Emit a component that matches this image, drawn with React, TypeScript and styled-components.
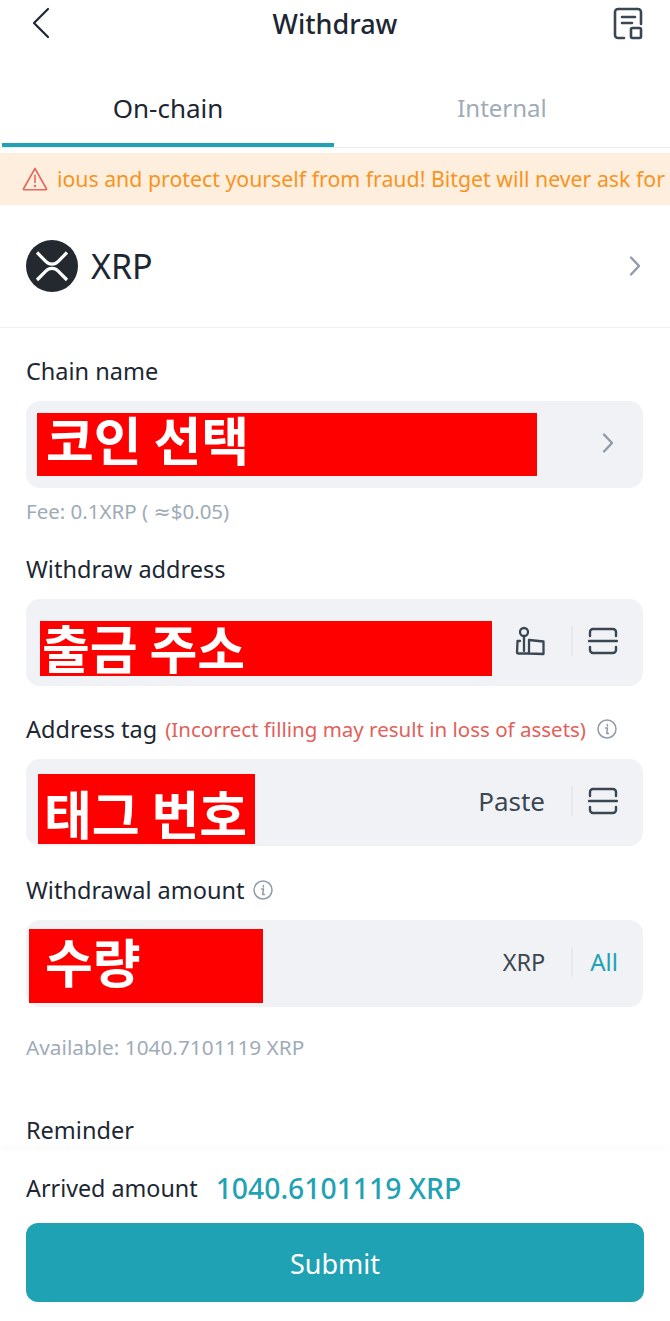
import styled, { createGlobalStyle } from 'styled-components';

const GlobalStyle = createGlobalStyle`
  html, body {
    margin: 0;
    padding: 0;
    background: #fff;
  }
  * {
    box-sizing: border-box;
  }
`;

const FONT = `"Noto Sans", "DejaVu Sans", "Noto Sans CJK KR", sans-serif`;

function BackIcon() {
  return (
    <svg width="20" height="32" viewBox="0 0 20 32" fill="none">
      <path d="M18 2 4 16 18 30" stroke="#1c2733" strokeWidth="2.2" strokeLinecap="round" strokeLinejoin="round" />
    </svg>
  );
}

function RecordIcon() {
  return (
    <svg width="30" height="34" viewBox="0 0 30 34" fill="none" stroke="#3a4753" strokeWidth="2.6" strokeLinecap="round" strokeLinejoin="round">
      <path d="M11 31H5a3 3 0 0 1-3-3V5a3 3 0 0 1 3-3h20a3 3 0 0 1 3 3v12" />
      <path d="M9 10h13M9 16h10" />
      <rect x="18" y="21" width="10" height="10" rx="1.5" />
    </svg>
  );
}

function WarningIcon() {
  return (
    <svg width="26" height="24" viewBox="0 0 26 24" fill="none" stroke="#e5685c" strokeWidth="1.6" strokeLinejoin="round" strokeLinecap="round">
      <path d="M13 1.5 24.6 22a.5.5 0 0 1-.4.7H1.8a.5.5 0 0 1-.4-.7z" />
      <path d="M13 8.5v7" />
      <circle cx="13" cy="19" r="0.5" />
    </svg>
  );
}

function XrpLogo() {
  return (
    <svg width="52" height="52" viewBox="0 0 52 52" fill="none">
      <circle cx="26" cy="26" r="26" fill="#23292f" />
      <path d="M11 12.500 20 21.500a8 8 0 0 0 12 0L41 12.500" stroke="#fff" strokeWidth="3.200" />
      <path d="M11 40 20 31a8 8 0 0 1 12 0L41 40" stroke="#fff" strokeWidth="3.200" />
    </svg>
  );
}

function Chevron() {
  return (
    <svg width="14" height="22" viewBox="0 0 14 22" fill="none">
      <path d="M3 2.500 11 11 3 19.500" stroke="#8f9ba8" strokeWidth="2.4" strokeLinecap="round" strokeLinejoin="round" />
    </svg>
  );
}

function ScanIcon() {
  return (
    <svg width="30" height="28" viewBox="0 0 30 28" fill="none" stroke="#3a4753" strokeWidth="2.4" strokeLinecap="round">
      <path d="M2 9V5a3 3 0 0 1 3-3h20a3 3 0 0 1 3 3v4" />
      <path d="M1 14h28" />
      <path d="M2 20v3a3 3 0 0 0 3 3h20a3 3 0 0 0 3-3v-3" />
    </svg>
  );
}

function AddressBookIcon() {
  return (
    <svg width="30" height="30" viewBox="0 0 30 30" fill="none" stroke="#3a4753" strokeWidth="2.3" strokeLinecap="round" strokeLinejoin="round">
      <circle cx="9" cy="6" r="4" />
      <path d="M9 10v15" />
      <path d="M5 15H2.500L2 26.500a1 1 0 0 0 1 1h10l15.500.5V15.500L14 14v13" />
    </svg>
  );
}

function InfoIcon() {
  return (
    <svg width="20" height="20" viewBox="0 0 20 20" fill="none">
      <circle cx="10" cy="10" r="9" stroke="#8f9ba8" strokeWidth="1.500" />
      <path d="M10.400 5.500v1.500M8.500 9h2l-.8 5.500h1.800" stroke="#8f9ba8" strokeWidth="1.500" strokeLinecap="round" strokeLinejoin="round" />
    </svg>
  );
}

export default function App() {
  return (
    <>
      <GlobalStyle />
      <Page>
        <TopBar>
          <BackButton>
            <BackIcon />
          </BackButton>
          <Title>Withdraw</Title>
          <RecordButton>
            <RecordIcon />
          </RecordButton>
        </TopBar>

        <Tabs>
          <Tab $active>On-chain</Tab>
          <Tab>Internal</Tab>
        </Tabs>

        <Notice>
          <NoticeIcon>
            <WarningIcon />
          </NoticeIcon>
          <NoticeTrack>
            <NoticeText>Be cautious and protect yourself from fraud! Bitget will never ask for</NoticeText>
          </NoticeTrack>
        </Notice>

        <CoinRow>
          <XrpLogo />
          <CoinName>XRP</CoinName>
          <CoinChevron>
            <Chevron />
          </CoinChevron>
        </CoinRow>

        <Form>
          <Label $top={28}>Chain name</Label>
          <Field>
            <Redact $left={11} $top={12} $width={500} $height={63} $padLeft={9} $padTop={0}>코인 선택</Redact>
            <FieldEnd>
              <FieldChevron>
                <Chevron />
              </FieldChevron>
            </FieldEnd>
          </Field>
          <FeeHint>Fee: 0.1XRP ( ≈$0.05)</FeeHint>

          <Label $top={30}>Withdraw address</Label>
          <Field>
            <Redact $left={14} $top={22} $width={452} $height={55} $padLeft={2} $padTop={0}>출금 주소</Redact>
            <FieldEnd>
              <AddressBookIcon />
              <Divider $gap={15} />
              <ScanIcon />
            </FieldEnd>
          </Field>

          <TagLabel>
            <Label $top={0}>Address tag</Label>
            <Warn>(Incorrect filling may result in loss of assets)</Warn>
            <InfoIcon />
          </TagLabel>
          <Field>
            <Redact $left={12} $top={15} $width={217} $height={70} $padLeft={6} $padTop={13}>태그 번호</Redact>
            <FieldEnd>
              <Paste>Paste</Paste>
              <Divider $gap={15} />
              <ScanIcon />
            </FieldEnd>
          </Field>

          <AmountLabel>
            <Label $top={0}>Withdrawal amount</Label>
            <InfoIcon />
          </AmountLabel>
          <Field>
            <Redact $left={3} $top={9} $width={234} $height={74} $padLeft={16} $padTop={6}>수량</Redact>
            <FieldEnd>
              <Unit>XRP</Unit>
              <Divider $gap={17} />
              <AllLink>All</AllLink>
            </FieldEnd>
          </Field>
          <Hint>Available: 1040.7101119 XRP</Hint>
          <Label $top={55}>Reminder</Label>
        </Form>

        <Footer>
          <ArrivedRow>
            <ArrivedLabel>Arrived amount</ArrivedLabel>
            <ArrivedValue>1040.6101119 XRP</ArrivedValue>
          </ArrivedRow>
          <Submit>Submit</Submit>
        </Footer>
      </Page>
    </>
  );
}

const Page = styled.div`
  position: relative;
  width: 670px;
  height: 1321px;
  overflow: hidden;
  background: #fff;
  font-family: ${FONT};
  color: #1c2733;
`;

const TopBar = styled.header`
  position: relative;
  height: 48px;
  display: flex;
  align-items: center;
  justify-content: center;
`;

const BackButton = styled.div`
  position: absolute;
  left: 30px;
  top: 7px;
  line-height: 0;
`;

const RecordButton = styled.div`
  position: absolute;
  left: 613px;
  top: 7px;
  line-height: 0;
`;

const Title = styled.h1`
  margin: 0;
  font-size: 27px;
  font-weight: 500;
  line-height: 48px;
  color: #1c2733;
`;

const Tabs = styled.div`
  height: 100px;
  display: flex;
  padding: 0 0 0 2px;
  border-bottom: 1px solid #e9ebee;
`;

const Tab = styled.div<{ $active?: boolean }>`
  width: ${(p) => (p.$active ? '332px' : '336px')};
  height: 99px;
  padding-top: 39px;
  text-align: center;
  font-size: ${(p) => (p.$active ? '26px' : '24px')};
  line-height: 42px;
  color: ${(p) => (p.$active ? '#1c2733' : '#a0abb8')};
  border-bottom: ${(p) => (p.$active ? '4px solid #1fa2b4' : 'none')};
`;

const Notice = styled.div`
  margin-top: 5px;
  height: 52px;
  display: flex;
  align-items: center;
  background: #feeedd;
  padding-left: 22px;
`;

const NoticeIcon = styled.div`
  width: 36px;
  flex: none;
  line-height: 0;
`;

const NoticeTrack = styled.div`
  flex: 1;
  overflow: hidden;
  position: relative;
  height: 30px;
`;

const NoticeText = styled.div`
  position: absolute;
  right: 5px;
  top: 0;
  white-space: nowrap;
  font-size: 21.3px;
  line-height: 30px;
  color: #f7941f;
`;

const CoinRow = styled.div`
  height: 123px;
  display: flex;
  align-items: center;
  padding: 0 28px 0 26px;
  border-bottom: 1px solid #f0f1f3;
`;

const CoinName = styled.div`
  margin-left: 13px;
  font-size: 34px;
  line-height: 40px;
`;

const CoinChevron = styled.div`
  margin-left: auto;
  line-height: 0;
`;

const Form = styled.div`
  padding: 0 27px 0 26px;
  display: flex;
  flex-direction: column;
`;

const Label = styled.div<{ $top: number }>`
  margin-top: ${(p) => p.$top}px;
  font-size: 23.5px;
  line-height: 30px;
  color: #1c2733;
`;

const Field = styled.div`
  position: relative;
  margin-top: 15px;
  height: 87px;
  display: flex;
  align-items: center;
  justify-content: flex-end;
  background: #f1f2f5;
  border-radius: 14px;
`;

/* the red blocks were painted over the screenshot, so they sit on top of the field */
const Redact = styled.div<{ $left: number; $top: number; $width: number; $height: number; $padLeft: number; $padTop: number }>`
  position: absolute;
  left: ${(p) => p.$left}px;
  top: ${(p) => p.$top}px;
  width: ${(p) => p.$width}px;
  height: ${(p) => p.$height}px;
  padding: ${(p) => p.$padTop}px 0 0 ${(p) => p.$padLeft}px;
  background: #ff0000;
  color: #fff;
  font-family: "Noto Sans CJK KR", sans-serif;
  font-size: 52px;
  font-weight: 700;
  line-height: 51px;
  white-space: nowrap;
`;

const FieldEnd = styled.div`
  display: flex;
  align-items: center;
  padding: 0 25px 3px 0;
`;

const FieldChevron = styled.div`
  margin-right: 3px;
  line-height: 0;
`;

const Divider = styled.div<{ $gap: number }>`
  width: 2px;
  height: 30px;
  margin: 0 ${(p) => p.$gap}px 0 26px;
  background: #e6e8eb;
`;

const Hint = styled.div`
  margin-top: 27px;
  font-size: 20.8px;
  line-height: 26px;
  color: #a0abb8;
`;

const FeeHint = styled(Hint)`
  margin-top: 10px;
  font-size: 20.5px;
`;

const TagLabel = styled.div`
  margin-top: 28px;
  display: flex;
  align-items: center;
  gap: 8px;
`;

const Warn = styled.span`
  font-size: 20.5px;
  line-height: 30px;
  color: #e2605a;
  margin-right: 3px;
`;

const AmountLabel = styled.div`
  margin-top: 29px;
  display: flex;
  align-items: center;
  gap: 8px;
`;

const Paste = styled.span`
  font-size: 26px;
  line-height: 34px;
  color: #3a4753;
`;

const Unit = styled.span`
  font-size: 23.5px;
  line-height: 30px;
  color: #3a4753;
`;

const AllLink = styled.span`
  font-size: 24px;
  line-height: 30px;
  color: #1fa2b4;
`;

const Footer = styled.footer`
  position: absolute;
  left: 0;
  right: 0;
  bottom: 0;
  height: 171px;
  padding: 20px 26px 0;
  background: #fff;
  box-shadow: 0 -4px 10px rgba(0, 0, 0, 0.02);
`;

const ArrivedRow = styled.div`
  display: flex;
  align-items: center;
  height: 36px;
`;

const ArrivedLabel = styled.span`
  font-size: 23.3px;
  color: #1c2733;
`;

const ArrivedValue = styled.span`
  margin-left: 18px;
  font-size: 28.3px;
  font-weight: 500;
  color: #1fa2b4;
`;

const Submit = styled.button`
  display: block;
  width: 618px;
  height: 79px;
  margin-top: 17px;
  padding-top: 2px;
  border: 0;
  border-radius: 12px;
  background: #1fa2b4;
  color: #fff;
  font-family: ${FONT};
  font-size: 27px;
`;
